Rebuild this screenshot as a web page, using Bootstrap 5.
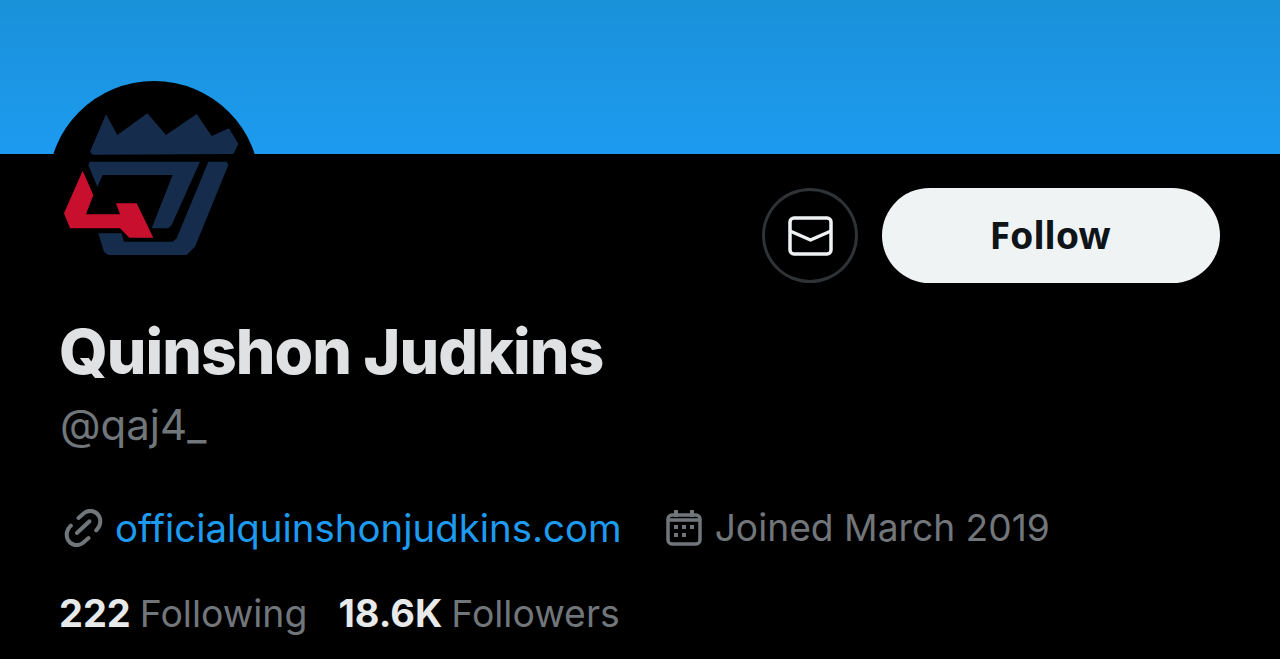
<!DOCTYPE html>
<html lang="en">
<head>
  <meta charset="UTF-8">
  <title>Quinshon Judkins</title>
  <meta name="viewport" content="width=device-width, initial-scale=1.0">
  <link href="https://cdn.jsdelivr.net/npm/bootstrap@5.3.3/dist/css/bootstrap.min.css" rel="stylesheet">
  <style>
    html, body { height: 100%; }
    body {
      margin: 0;
      background: #000;
      overflow: hidden;
      font-family: Inter, "Liberation Sans", sans-serif;
    }
    .banner {
      height: 154px;
      background: linear-gradient(#1a91d9, #1d9bf0);
    }
    .profile {
      padding: 34px 60px 0;
      position: relative;
    }
    .avatar {
      position: absolute;
      left: 48px;
      top: -73px;
      width: 212px;
      height: 212px;
      border-radius: 50%;
      background: #000;
    }
    .avatar svg { display: block; }
    .msg-btn {
      width: 96px;
      height: 95px;
      border: 3px solid #2f3336;
      border-radius: 50%;
      background: transparent;
    }
    .follow-btn {
      width: 338px;
      height: 95px;
      padding: 0 2px 0 0;
      border: 0;
      border-radius: 48px;
      background: #eff3f4;
      color: #0f1419;
      font-family: "Noto Sans", sans-serif;
      font-weight: 700;
      font-size: 37.5px;
    }
    .full-name {
      margin: 32px 0 0 -1px;
      font-size: 62.5px;
      line-height: 72px;
      font-weight: 800;
      letter-spacing: -1px;
      color: #e0e1e2;
    }
    .handle {
      margin-top: 13px;
      font-size: 42px;
      line-height: 50px;
      color: #71767b;
    }
    .meta-row {
      margin-top: 55px;
      font-size: 37.2px;
      line-height: 46px;
      color: #71767b;
    }
    .site-link {
      font-size: 38.4px;
      color: #1d9bf0;
      text-decoration: none;
    }
    .link-icon { margin: 0 12px 0 4px; }
    .cal-icon { margin: 0 13px 0 44px; }
    .stats-row {
      margin-top: 39px;
      gap: 32px;
      font-size: 37.4px;
      line-height: 46px;
      color: #71767b;
    }
    .stats-row strong {
      margin: 0 -1.5px 0 -1px;
      font-size: 38px;
      color: #e7e9ea;
      font-weight: 700;
    }
  </style>
</head>
<body>
  <div class="banner"></div>

  <div class="profile">
    <div class="avatar">
      <svg width="212" height="212" viewBox="24 33 636 636">
        <path fill="#162c4d" d="M150 245 198 133 232 195 322 130 378 195 470 132 515 198 567 175 595 222 580 252 158 254Z"/>
        <path fill="#162c4d" d="M145 285 150 275 480 275 395 465 385 475 335 475 398 315 188 315 172 350Z"/>
        <path fill="#162c4d" d="M505 275 560 275 565 285 465 530 440 555 205 555 192 545 175 490 245 490 252 515 398 515 410 505Z"/>
        <path fill="#c8102e" d="M128 302 160 375 138 433 240 433 228 400 290 400 340 503 268 503 240 475 90 475 72 430Z"/>
      </svg>
    </div>

    <div class="d-flex justify-content-end align-items-center gap-4">
      <button class="msg-btn d-flex align-items-center justify-content-center p-0" aria-label="Message">
        <svg width="45" height="40" viewBox="0 0 45 40" fill="none" stroke="#eff3f4" stroke-width="3.5" stroke-linejoin="round">
          <rect x="2" y="2" width="41" height="36" rx="4"/>
          <path d="M2 15 22.5 24 43 15"/>
        </svg>
      </button>
      <button class="follow-btn">Follow</button>
    </div>

    <h1 class="full-name">Quinshon Judkins</h1>
    <div class="handle">@qaj4_</div>

    <div class="meta-row d-flex align-items-center">
      <svg class="link-icon" width="39" height="38" viewBox="42 38 116 114" fill="none" stroke="#71767b" stroke-width="12" stroke-linecap="round">
        <path d="M85 65 102 50C118 38 140 44 148 62 153 76 150 90 138 102"/>
        <path d="M115 125 98 140C82 152 60 146 52 128 47 114 50 100 62 88"/>
        <path d="M80 110 118 75"/>
      </svg>
      <a class="site-link" href="#">officialquinshonjudkins.com</a>
      <svg class="cal-icon" width="36" height="36" viewBox="0 0 36 36" fill="none" stroke="#71767b" stroke-width="3.5">
        <rect x="2" y="5" width="32" height="29" rx="4"/>
        <path d="M10 0V7M26 0V7" stroke-width="4"/>
        <path d="M2 10H34"/>
        <g fill="#71767b" stroke="none">
          <rect x="8" y="15" width="4" height="4"/><rect x="16" y="15" width="4" height="4"/><rect x="24" y="15" width="4" height="4"/>
          <rect x="8" y="23" width="4" height="4"/><rect x="16" y="23" width="4" height="4"/>
        </g>
      </svg>
      <span>Joined March 2019</span>
    </div>

    <div class="stats-row d-flex">
      <span><strong>222</strong> Following</span>
      <span><strong>18.6K</strong> Followers</span>
    </div>
  </div>
</body>
</html>
